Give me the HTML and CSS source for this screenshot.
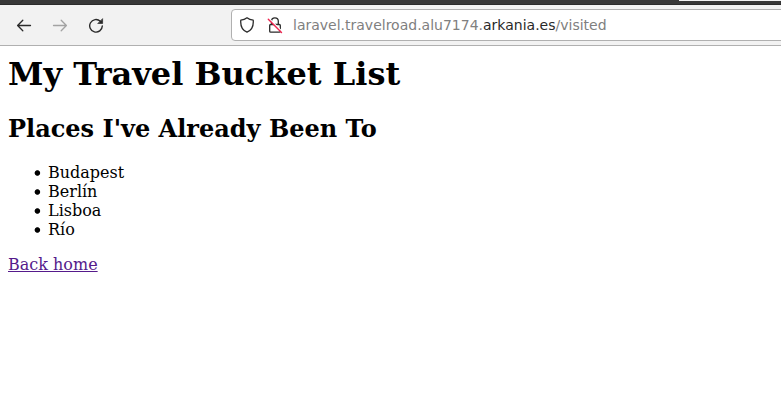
FILE: index.html
```html
<!DOCTYPE html>
<html lang="en">
<head>
<meta charset="utf-8">
<title>My Travel Bucket List</title>
<link rel="stylesheet" href="styles.css">
</head>
<body>
<div class="tabstrip"><div class="tab-edge"></div></div>
<div class="toolbar">
  <svg class="icon back" viewBox="0 0 16 16"><path d="M14.500 8.500H1.700M6.800 3.300L1.600 8.500l5.200 5.200"/></svg>
  <svg class="icon forward" viewBox="0 0 16 16"><path d="M1.500 8.500h12.800M9.200 3.300l5.200 5.200-5.200 5.200"/></svg>
  <svg class="icon reload" viewBox="0 0 16 16"><path d="M14.300 9A6.300 6.300 0 1 1 12.300 4.200"/><path class="head" d="M14.600 2v4.500H10.100z"/></svg>
  <div class="urlbar">
    <svg class="icon shield" viewBox="0 0 16 16"><path d="M8 .8Q10.500 2.900 14.200 3.100C14.700 8.500 13.300 13 8 15.200 2.700 13 1.300 8.500 1.800 3.100Q5.500 2.900 8 .8z"/></svg>
    <svg class="icon lock" viewBox="0 0 16 16"><path d="M4.500 7.500V4.200a3.400 3.400 0 0 1 6.800 0v3.300M3.700 7.500h8.600q1 0 1 1v5.700q0 1-1 1H3.700q-1 0-1-1V8.500q0-1 1-1z"/><path class="gap" d="M2 1.500l13 13"/><path class="slash" d="M1.300 2.300l13.200 13.200"/></svg>
    <span class="url">laravel.travelroad.alu7174.<b>arkania.es</b>/visited</span>
  </div>
</div>
<main>
  <h1>My Travel Bucket List</h1>
  <h2>Places I've Already Been To</h2>
  <ul><li>Budapest</li><li>Berlín</li><li>Lisboa</li><li>Río</li></ul>
  <a href="#">Back home</a>
</main>
</body>
</html>
```
FILE: styles.css
```css
body { margin: 0; background: #fff; color: #000; font: 16px "DejaVu Serif", serif; overflow: hidden; }
.tabstrip { box-sizing: border-box; height: 5px; background: #383838; border-bottom: 1px solid #2b2b2b; display: flex; justify-content: flex-end; }
.tab-edge { width: 102px; height: 1px; background: #f2f2f2; }
.toolbar { box-sizing: border-box; height: 41px; background: #f2f2f2; border-bottom: 1px solid #b0b0b0; display: flex; align-items: center; padding-left: 16px; overflow: hidden; }
.icon { width: 16px; height: 16px; flex: none; fill: none; stroke: #2a2a2a; stroke-width: 1.3; stroke-linecap: round; stroke-linejoin: round; }
.forward { margin-left: 20px; stroke: #a3a3a3; }
.reload { margin-left: 20px; stroke-width: 1.4; }
.head { fill: #2a2a2a; stroke-width: .7; }
.urlbar { box-sizing: border-box; flex: none; width: 600px; height: 32px; margin-left: 127px; border: 1px solid #b0b0b0; border-radius: 4px; background: #fff; display: flex; align-items: center; padding-left: 7px; }
.lock { margin-left: 12px; overflow: visible; }
.gap { stroke: #fff; stroke-width: 1.4; }
.icon .slash { stroke: #f0244f; stroke-width: 1.4; }
.url { margin-left: 10px; font: 14px "DejaVu Sans", sans-serif; color: #808080; white-space: nowrap; }
.url b { font-weight: normal; color: #2a2a2a; }
main { padding: 9px 8px 8px; }
h1 { margin: 0; font-size: 32px; line-height: 38px; }
h2 { margin: 22px 0 20px; font-size: 24px; line-height: 28px; }
ul { margin: 0 0 16px; padding-left: 40px; line-height: 19px; list-style: none; }
li { display: flex; align-items: center; }
li::before { content: ""; width: 7px; height: 7px; margin: 2px 7px 0 -14px; background: radial-gradient(circle at 3.400px 3px, #000 2.300px, transparent 3.200px); }
a { color: #551a8b; line-height: 19px; }
```
